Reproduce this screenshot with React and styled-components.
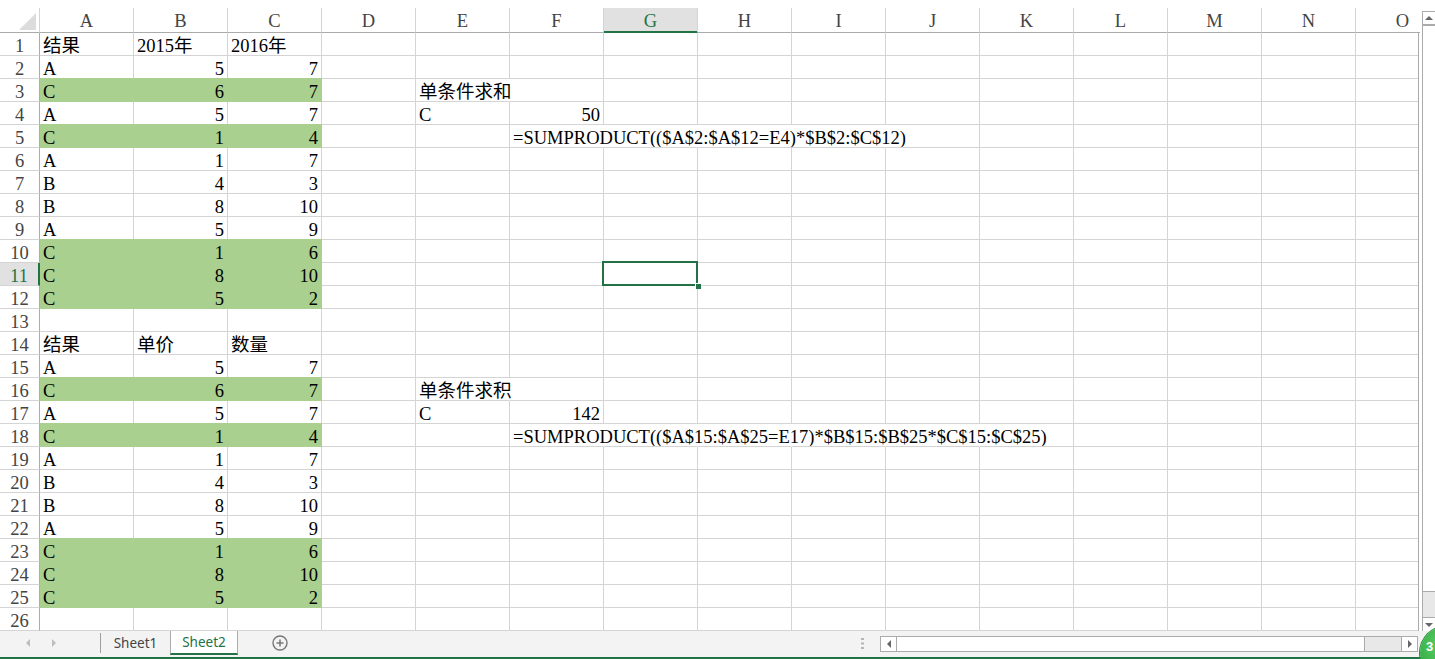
import React from 'react';
import styled, { createGlobalStyle, css } from 'styled-components';

const GREEN = '#217346';
const FILL = '#a9d08e';
const GRID = '#d4d4d4';
const FRAME = '#ababab';
const COLS = ['A', 'B', 'C', 'D', 'E', 'F', 'G', 'H', 'I', 'J', 'K', 'L', 'M', 'N', 'O'];
const GRID_COLS = '40px repeat(15, 94px)';

const Global = createGlobalStyle`
  html, body { margin: 0; padding: 0; background: #fff; }
  body { width: 1435px; height: 659px; overflow: hidden; }
`;

const Window = styled.div`
  position: relative;
  width: 1435px;
  height: 659px;
  overflow: hidden;
  display: flex;
  flex-direction: column;
  background: #fff;
  font-family: "Liberation Serif", "Noto Sans CJK SC", serif;
`;

const Main = styled.div`
  display: flex;
  height: 631px;
`;

const Sheet = styled.div`
  width: 1420px;
  display: flex;
  flex-direction: column;
  overflow: hidden;
`;

const HeaderRow = styled.div`
  display: grid;
  grid-template-columns: ${GRID_COLS};
  padding-top: 8px;
  width: max-content;
`;

const ColHead = styled.div`
  box-sizing: border-box;
  height: 25px;
  padding-top: 2px;
  border-right: 1px solid ${GRID};
  border-bottom: 1px solid ${FRAME};
  font-size: 18.5px;
  line-height: 22px;
  text-align: center;
  color: #444;
  ${p => p.$active && css`
    background: #e1e1e1;
    color: ${GREEN};
    border-bottom-color: ${GREEN};
    box-shadow: inset 0 -1px 0 ${GREEN};
  `}
`;

const Corner = styled.div`
  box-sizing: border-box;
  height: 25px;
  border-right: 1px solid ${GRID};
  border-bottom: 1px solid ${FRAME};
  display: flex;
  align-items: flex-end;
  justify-content: flex-end;
  padding: 0 3px 2px 0;
`;

const Body = styled.div`
  box-sizing: border-box;
  width: 1419px;
  flex: 1;
  overflow: hidden;
  border-right: 1px solid ${FRAME};
`;

const BodyGrid = styled.div`
  display: grid;
  grid-template-columns: ${GRID_COLS};
  grid-auto-rows: 23px;
  width: max-content;
`;

const RowHead = styled.div`
  box-sizing: border-box;
  height: 23px;
  padding-top: 2px;
  border-right: 1px solid ${FRAME};
  border-bottom: 1px solid ${GRID};
  font-size: 18.5px;
  line-height: 22px;
  text-align: center;
  color: #444;
  ${p => p.$active && css`
    background: #e1e1e1;
    color: ${GREEN};
    border-right: 2px solid ${GREEN};
  `}
`;

const Cell = styled.div`
  box-sizing: border-box;
  height: 23px;
  padding: 2px 3px 0;
  border-right: 1px solid ${p => (p.$fill ? FILL : p.$open ? 'transparent' : GRID)};
  border-bottom: 1px solid ${p => (p.$fill ? FILL : GRID)};
  background: ${p => (p.$fill ? FILL : 'transparent')};
  ${p => p.$fill && css`box-shadow: 0 -1px 0 ${FILL};`}
  font-size: 18.5px;
  line-height: 22px;
  color: #000;
  white-space: nowrap;
  text-align: ${p => (p.$right ? 'right' : 'left')};
  ${p => p.$selected && css`
    position: relative;
    z-index: 1;
    &::after {
      content: '';
      position: absolute;
      top: -2px;
      left: -2px;
      right: -1px;
      bottom: -1px;
      border: 2px solid ${GREEN};
    }
    &::before {
      content: '';
      position: absolute;
      right: -4px;
      bottom: -4px;
      width: 5px;
      height: 5px;
      background: ${GREEN};
      border-left: 1px solid #fff;
      border-top: 1px solid #fff;
      z-index: 2;
    }
  `}
`;

const VScroll = styled.div`
  box-sizing: border-box;
  width: 15px;
  padding: 11px 0 0 2px;
  display: flex;
`;

const VBox = styled.div`
  flex: 1;
  display: flex;
  flex-direction: column;
  border-left: 1px solid ${FRAME};
  border-top: 1px solid ${FRAME};
`;

const VArrow = styled.div`
  height: 12px;
  display: flex;
  align-items: center;
  justify-content: center;
  background: #fff;
  ${p => p.$top && css`border-bottom: 2px solid ${FRAME};`}
  ${p => p.$bottom && css`border-top: 1px solid ${FRAME}; height: 13px;`}
`;

const VThumb = styled.div`
  flex: 1;
  background: #fff;
  border-bottom: 1px solid ${FRAME};
`;

const VTrack = styled.div`
  height: 25px;
  background: #e8e8e8;
`;

const TabBar = styled.div`
  height: 26px;
  background: #f3f3f3;
  display: flex;
  align-items: flex-start;
  font-family: "Noto Sans", "Liberation Sans", sans-serif;
`;

const StatusStrip = styled.div`
  height: 2px;
  background: ${GREEN};
`;

const NavArrows = styled.div`
  width: 100px;
  height: 24px;
  display: flex;
  align-items: center;
  padding-left: 26px;
  gap: 22px;
  box-sizing: border-box;
`;

const Separator = styled.div`
  width: 1px;
  height: 20px;
  margin-top: 2px;
  background: #9e9e9e;
`;

const Tab = styled.div`
  box-sizing: border-box;
  height: 24px;
  display: flex;
  align-items: center;
  justify-content: center;
  width: ${p => p.$w}px;
  font-size: 13.5px;
  color: #444;
  ${p => p.$active && css`
    background: #fff;
    color: ${GREEN};
    border-left: 1px solid ${FRAME};
    border-right: 1px solid ${FRAME};
    border-bottom: 2px solid ${GREEN};
  `}
`;

const AddSheet = styled.div`
  margin-left: 34px;
  height: 24px;
  display: flex;
  align-items: center;
`;

const Spacer = styled.div`
  flex: 1;
`;

const Dots = styled.div`
  height: 24px;
  display: flex;
  align-items: center;
  margin-right: 16px;
`;

const HScroll = styled.div`
  box-sizing: border-box;
  width: 538px;
  height: 16px;
  margin-top: 5px;
  margin-right: 17px;
  border: 1px solid ${FRAME};
  display: flex;
`;

const HArrow = styled.div`
  width: 15px;
  display: flex;
  align-items: center;
  justify-content: center;
  background: #fff;
  ${p => p.$left && css`border-right: 1px solid ${FRAME};`}
  ${p => p.$right && css`border-left: 1px solid ${FRAME};`}
`;

const HThumb = styled.div`
  flex: 1;
  background: #fff;
  border-right: 1px solid ${FRAME};
`;

const HTrack = styled.div`
  width: 36px;
  background: #e8e8e8;
`;

const Ball = styled.div`
  position: absolute;
  left: 1420px;
  top: 626px;
  width: 54px;
  height: 54px;
  border-radius: 50%;
  background: radial-gradient(circle at 40% 35%, #5fd06a, #2aa53a 70%);
  box-shadow: 0 0 0 1px #1f8f2f;
  color: #fff;
  font-family: "Liberation Sans", sans-serif;
  font-weight: bold;
  font-size: 13px;
  line-height: 14px;
  padding: 14px 0 0 6px;
  box-sizing: border-box;
`;

const Tri = ({ dir, color = '#bdbdbd', size = 6 }) => {
  const pts = {
    left: `${size},0 ${size},${size * 2} 0,${size}`,
    right: `0,0 0,${size * 2} ${size},${size}`,
    up: `0,${size} ${size * 2},${size} ${size},0`,
    down: `0,0 ${size * 2},0 ${size},${size}`,
  }[dir];
  const w = dir === 'left' || dir === 'right' ? size : size * 2;
  const h = dir === 'left' || dir === 'right' ? size * 2 : size;
  return (
    <svg width={w} height={h} viewBox={`0 0 ${w} ${h}`}>
      <polygon points={pts} fill={color} />
    </svg>
  );
};

const formula1 = '=SUMPRODUCT(($A$2:$A$12=E4)*$B$2:$C$12)';
const formula2 = '=SUMPRODUCT(($A$15:$A$25=E17)*$B$15:$B$25*$C$15:$C$25)';

function buildRows() {
  const rows = Array.from({ length: 26 }, (_, i) => ({ n: i + 1, cells: {}, fill: false, open: [] }));
  const table = (start, head, data, greens) => {
    rows[start - 1].cells = { A: { v: head[0] }, B: { v: head[1] }, C: { v: head[2] } };
    data.forEach((d, i) => {
      const r = rows[start + i];
      r.cells = { A: { v: d[0] }, B: { v: d[1], right: true }, C: { v: d[2], right: true } };
      r.fill = greens.includes(start + i + 1);
    });
  };
  const data = [
    ['A', 5, 7], ['C', 6, 7], ['A', 5, 7], ['C', 1, 4], ['A', 1, 7], ['B', 4, 3],
    ['B', 8, 10], ['A', 5, 9], ['C', 1, 6], ['C', 8, 10], ['C', 5, 2],
  ];
  table(1, ['结果', '2015年', '2016年'], data, [3, 5, 10, 11, 12]);
  table(14, ['结果', '单价', '数量'], data, [16, 18, 23, 24, 25]);

  rows[2].cells.E = { v: '单条件求和' };
  rows[2].open = ['E'];
  rows[3].cells.E = { v: 'C' };
  rows[3].cells.F = { v: '50', right: true };
  rows[4].cells.F = { v: formula1 };
  rows[4].open = ['F', 'G', 'H', 'I'];

  rows[15].cells.E = { v: '单条件求积' };
  rows[15].open = ['E'];
  rows[16].cells.E = { v: 'C' };
  rows[16].cells.F = { v: '142', right: true };
  rows[17].cells.F = { v: formula2 };
  rows[17].open = ['F', 'G', 'H', 'I', 'J'];
  return rows;
}

const ROWS = buildRows();
const SEL = { row: 11, col: 'G' };

export default function App() {
  return (
    <Window>
      <Global />
      <Main>
        <Sheet>
          <HeaderRow>
            <Corner>
              <svg width="17" height="17" viewBox="0 0 17 17">
                <polygon points="17,0 17,17 0,17" fill="#dcdcdc" />
              </svg>
            </Corner>
            {COLS.map(c => (
              <ColHead key={c} $active={c === SEL.col}>{c}</ColHead>
            ))}
          </HeaderRow>
          <Body>
            <BodyGrid>
              {ROWS.map(r => (
                <React.Fragment key={r.n}>
                  <RowHead $active={r.n === SEL.row}>{r.n}</RowHead>
                  {COLS.map((c, ci) => {
                    const cell = r.cells[c];
                    const fill = r.fill && ci < 3;
                    return (
                      <Cell
                        key={c}
                        $fill={fill}
                        $right={cell && cell.right}
                        $open={r.open.includes(c)}
                        $selected={r.n === SEL.row && c === SEL.col}
                      >
                        {cell ? cell.v : ''}
                      </Cell>
                    );
                  })}
                </React.Fragment>
              ))}
            </BodyGrid>
          </Body>
        </Sheet>
        <VScroll>
          <VBox>
            <VArrow $top><Tri dir="up" color="#666" size={4} /></VArrow>
            <VThumb />
            <VTrack />
            <VArrow $bottom><Tri dir="down" color="#666" size={4} /></VArrow>
          </VBox>
        </VScroll>
      </Main>
      <TabBar>
        <NavArrows>
          <Tri dir="left" size={4} />
          <Tri dir="right" size={4} />
        </NavArrows>
        <Separator />
        <Tab $w={69}>Sheet1</Tab>
        <Tab $w={68} $active>Sheet2</Tab>
        <AddSheet>
          <svg width="16" height="16" viewBox="0 0 16 16">
            <circle cx="8" cy="8" r="7" fill="none" stroke="#777" strokeWidth="1.4" />
            <path d="M8 4.5v7M4.5 8h7" stroke="#777" strokeWidth="1.5" />
          </svg>
        </AddSheet>
        <Spacer />
        <Dots>
          <svg width="3" height="11" viewBox="0 0 3 11">
            <rect x="0" y="0" width="3" height="2" fill="#b5b5b5" />
            <rect x="0" y="4.5" width="3" height="2" fill="#b5b5b5" />
            <rect x="0" y="9" width="3" height="2" fill="#b5b5b5" />
          </svg>
        </Dots>
        <HScroll>
          <HArrow $left><Tri dir="left" color="#666" size={4} /></HArrow>
          <HThumb />
          <HTrack />
          <HArrow $right><Tri dir="right" color="#666" size={4} /></HArrow>
        </HScroll>
      </TabBar>
      <StatusStrip />
      <Ball>3</Ball>
    </Window>
  );
}
